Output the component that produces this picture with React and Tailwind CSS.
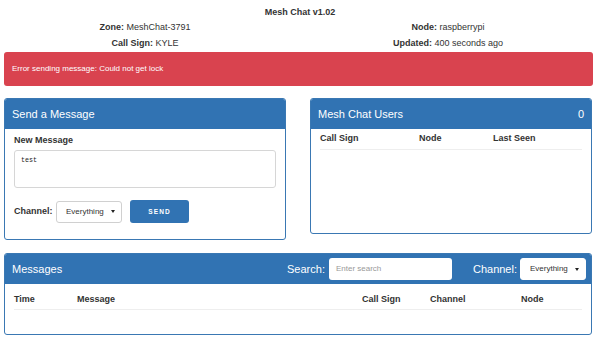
import React from 'react';

const Caret = () => (
    <svg width="4" height="3" viewBox="0 0 4 3" className="shrink-0">
        <path d="M0 0 L4 0 L2 3 Z" fill="#222" />
    </svg>
);

const Select = ({ className }) => (
    <div className={`flex items-center justify-between bg-white border border-[#d0d0d0] rounded-[3px] pl-[9px] pr-[6px] text-[8px] text-[#333] ${className}`}>
        <span>Everything</span>
        <Caret />
    </div>
);

const App = () => {
    return (
        <div className="w-[600px] h-[345px] bg-white font-['Liberation_Sans',Arial,sans-serif] text-[#333] overflow-hidden">
            {/* top info */}
            <div className="pt-[5px] text-[9px]">
                <div className="text-center font-bold leading-[14px]">Mesh Chat v1.02</div>
                <div className="flex leading-[16px]">
                    <div className="w-[290px] text-center">
                        <div><b>Zone:</b> MeshChat-3791</div>
                        <div><b>Call Sign:</b> KYLE</div>
                    </div>
                    <div className="w-[296px] ml-[10px] text-center">
                        <div><b>Node:</b> raspberrypi</div>
                        <div><b>Updated:</b> 400 seconds ago</div>
                    </div>
                </div>
            </div>

            <div className="mx-[4px] mt-[1px] w-[589px] h-[34px] bg-[#d9434f] rounded-[3px] flex items-center px-[8px] text-white text-[8px]">
                Error sending message: Could not get lock
            </div>

            <div className="flex items-start mt-[12px] ml-[4px]">
                {/* send panel */}
                <div className="w-[282px] h-[142px] border border-[#3a78b3] rounded-[3px] overflow-hidden">
                    <div className="h-[30px] bg-[#3173b3] flex items-center px-[7px] text-white text-[11px]">
                        Send a Message
                    </div>
                    <div className="px-[9px]">
                        <div className="mt-[5px] text-[9px] font-bold leading-[12px]">New Message</div>
                        <div className="mt-[4px] w-[262px] h-[38px] border border-[#d6d6d6] rounded-[3px] px-[6px] pt-[4px] font-['Liberation_Mono',monospace] text-[6.7px] text-[#222]">
                            test
                        </div>
                        <div className="flex items-center mt-[12px]">
                            <span className="text-[9px] font-bold w-[42px]">Channel:</span>
                            <Select className="w-[66px] h-[22px]" />
                            <div className="ml-[8px] w-[59px] h-[23px] bg-[#3173b3] rounded-[3px] flex items-center justify-center text-white text-[6.5px] font-bold tracking-[1.1px]">
                                SEND
                            </div>
                        </div>
                    </div>
                </div>

                {/* users panel */}
                <div className="ml-[24px] w-[282px] h-[136px] border border-[#3a78b3] rounded-[3px] overflow-hidden">
                    <div className="h-[30px] bg-[#3173b3] flex items-center justify-between pl-[7px] pr-[7px] text-white text-[11px]">
                        <span>Mesh Chat Users</span>
                        <span>0</span>
                    </div>
                    <div className="mx-[9px] grid grid-cols-[99px_74px_1fr] text-[9px] font-bold h-[21px] items-center border-b border-[#eeeeee]">
                        <span>Call Sign</span>
                        <span>Node</span>
                        <span>Last Seen</span>
                    </div>
                </div>
            </div>

            {/* messages panel */}
            <div className="mt-[13px] ml-[4px] w-[588px] h-[82px] border border-[#3a78b3] rounded-[3px] overflow-hidden">
                <div className="h-[30px] bg-[#3173b3] flex items-center pl-[7px] pr-[5px] text-white text-[11px]">
                    <span>Messages</span>
                    <span className="ml-auto">Search:</span>
                    <div className="ml-[4px] w-[123px] h-[22px] bg-white rounded-[3px] flex items-center px-[7px] text-[8px] text-[#999]">
                        Enter search
                    </div>
                    <span className="ml-[21px]">Channel:</span>
                    <Select className="ml-[3px] w-[66px] h-[22px] border-white" />
                </div>
                <div className="mx-[9px] grid grid-cols-[63px_285px_68px_91px_1fr] text-[9px] font-bold h-[26px] pt-[6px] items-center border-b border-[#eeeeee]">
                    <span>Time</span>
                    <span>Message</span>
                    <span>Call Sign</span>
                    <span>Channel</span>
                    <span>Node</span>
                </div>
            </div>
        </div>
    );
};

export default App;
